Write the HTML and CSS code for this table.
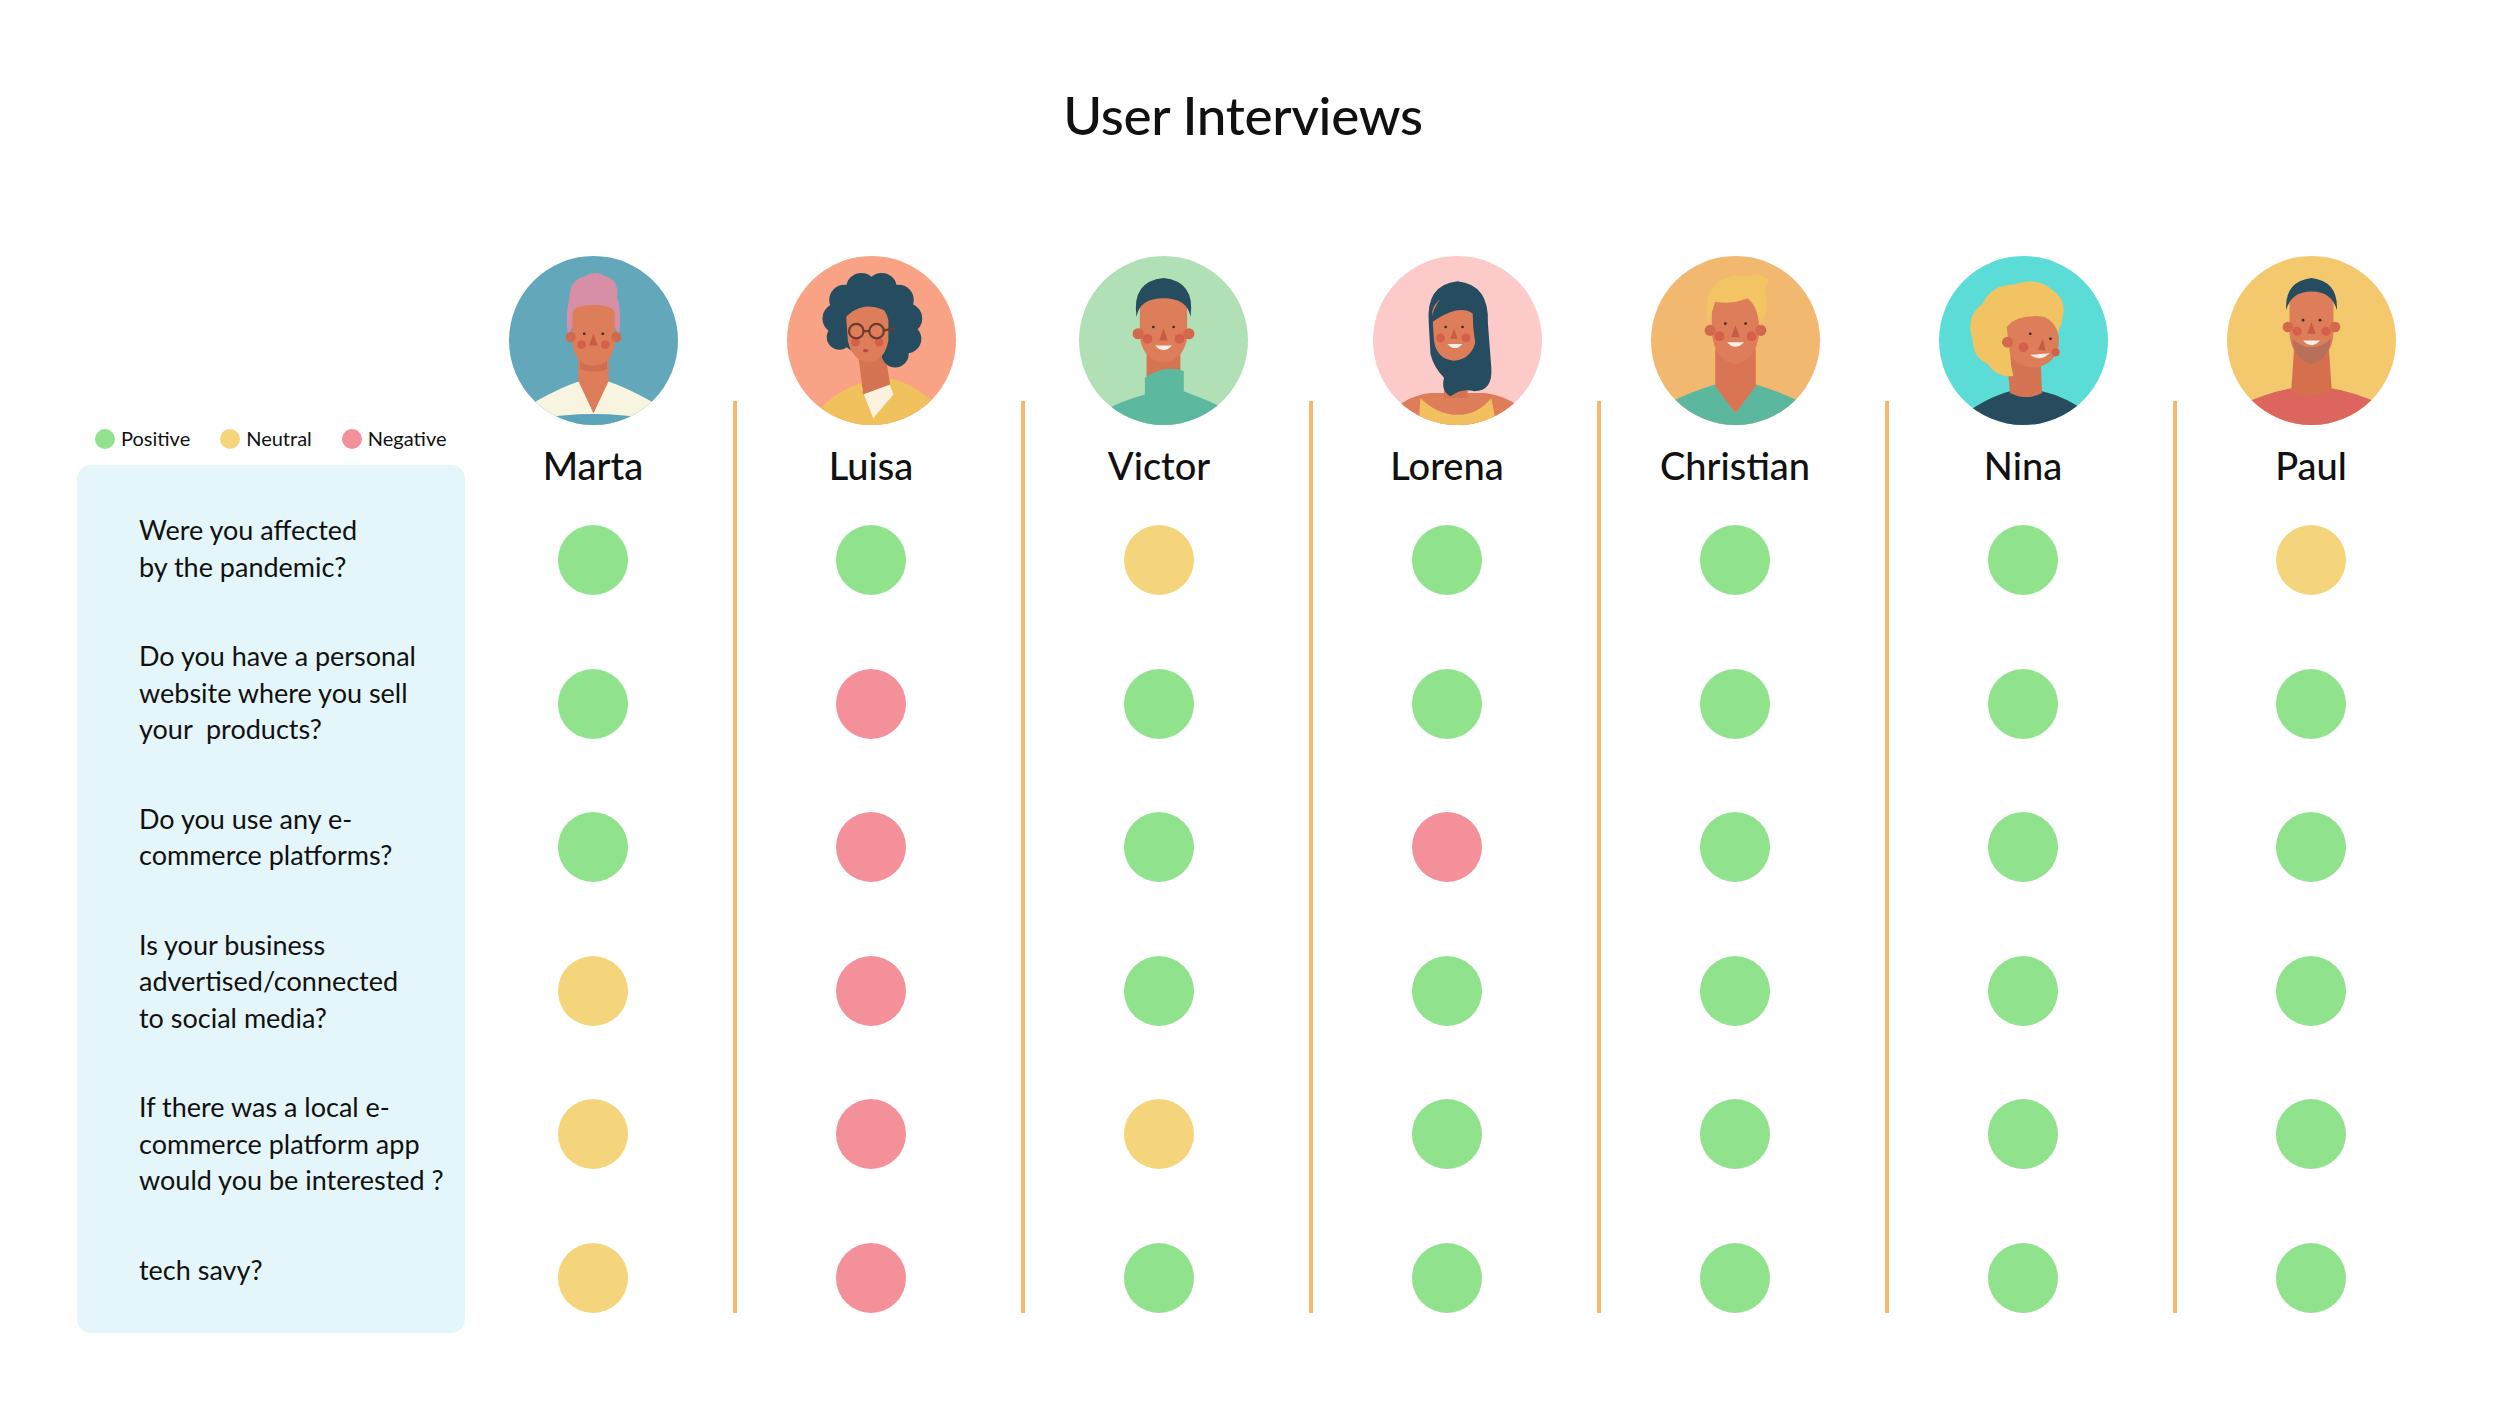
FILE: index.html
```html
<!DOCTYPE html>
<html lang="en">
<head>
<meta charset="utf-8">
<title>User Interviews</title>
<link rel="stylesheet" href="styles.css">
</head>
<body>
<h1 class="title">User Interviews</h1>
<main class="board">
  <aside class="side">
    <div class="legend">
      <div class="legend-item"><span class="ldot pos"></span>Positive</div>
      <div class="legend-item"><span class="ldot neu"></span>Neutral</div>
      <div class="legend-item"><span class="ldot neg"></span>Negative</div>
    </div>
    <div class="panel">
      <p class="question">Were you affected<br>by the pandemic?</p>
      <p class="question">Do you have a personal<br>website where you sell<br>your&nbsp; products?</p>
      <p class="question">Do you use any e-<br>commerce platforms?</p>
      <p class="question">Is your business<br>advertised/connected<br>to social media?</p>
      <p class="question">If there was a local e-<br>commerce platform app<br>would you be interested ?</p>
      <p class="question">tech savy?</p>
    </div>
  </aside>

  <section class="col col-first">
    <div class="col-head">
      <div class="avatar bg-marta">
        <svg viewBox="0 0 100 100" width="169" height="169">
          <path d="M16 86 Q30 78 42 74 L50 93 L58 74 Q70 78 84 86 L88 100 L12 100 Z" fill="#f7f5df"/>
          <path d="M14 97 Q50 90 86 97 L86 100 L14 100 Z" fill="#5aa3b8"/>
          <path d="M41 58 L41 74 L50 93 L59 74 L59 58 Z" fill="#dd7d5a"/>
          <path d="M42 62 Q50 66 58 62 L58 67 Q50 70 42 67 Z" fill="#d06f50"/>
          <path d="M35 48 Q33 34 36 24 Q36 14 45 12 Q51 8 57 12 Q65 14 64 24 Q67 34 65 48 Q62 36 50 34 Q38 36 35 48 Z" fill="#d78fa8"/>
          <path d="M37.5 34 Q38 29 50 29 Q62 29 62.5 34 L62.5 52 Q61 64 50 65 Q39 64 37.5 52 Z" fill="#dd7d5a"/>
          <circle cx="36.5" cy="48" r="3" fill="#d2694c"/>
          <circle cx="63.5" cy="48" r="3" fill="#d2694c"/>
          <circle cx="44.5" cy="46" r="0.8" fill="#3d2a2a"/>
          <circle cx="55.5" cy="46" r="0.8" fill="#3d2a2a"/>
          <path d="M50 46 L47.5 53 L52.5 53 Z" fill="#c65c44"/>
          <circle cx="43" cy="52.5" r="2.6" fill="#d65f4b"/>
          <circle cx="57" cy="52.5" r="2.6" fill="#d65f4b"/>
        </svg>
      </div>
    </div>
    <div class="col-body">
      <div class="name">Marta</div>
      <div class="dots">
        <span class="dot pos"></span><span class="dot pos"></span><span class="dot pos"></span>
        <span class="dot neu"></span><span class="dot neu"></span><span class="dot neu"></span>
      </div>
    </div>
  </section>

  <section class="col">
    <div class="col-head">
      <div class="avatar bg-luisa">
        <svg viewBox="0 0 100 100" width="169" height="169">
          <path d="M18 92 Q32 76 56 72 Q72 73 86 86 L88 100 L18 100 Z" fill="#f0c15c"/>
          <path d="M44 78 L51 96 L63 82 L60 74 Z" fill="#fbf3e0"/>
          <path d="M42 57 L45 82 L61 76 L58 57 Z" fill="#d47452"/>
          <g fill="#264c5f">
            <ellipse cx="50" cy="40" rx="22" ry="19"/>
            <circle cx="30" cy="37" r="9"/>
            <circle cx="34" cy="26" r="9"/>
            <circle cx="44" cy="19" r="9"/>
            <circle cx="56" cy="19" r="9"/>
            <circle cx="66" cy="26" r="9"/>
            <circle cx="71" cy="37" r="9"/>
            <circle cx="71" cy="49" r="8.5"/>
            <circle cx="64" cy="58" r="8"/>
            <circle cx="31" cy="48" r="7.5"/>
          </g>
          <path d="M35 36 Q37 27 47 27 Q58 28 60 38 L60 50 Q58 62 48 63 Q38 61 36 50 Z" fill="#dd7d5a"/>
          <path d="M33 38 Q35 22 49 22 Q62 23 64 37 Q56 29 46 30 Q39 31 33 38 Z" fill="#264c5f"/>
          <circle cx="40.5" cy="51" r="2.6" fill="#d65f4b"/>
          <circle cx="54.5" cy="51" r="2.6" fill="#d65f4b"/>
          <g fill="none" stroke="#6e3a2c" stroke-width="1.3">
            <circle cx="41" cy="44.5" r="4.3"/>
            <circle cx="53" cy="44.5" r="4.3"/>
            <path d="M45.3 44.5 L48.7 44.5 M57.3 44 L64 43"/>
          </g>
          <ellipse cx="46.5" cy="56" rx="1.6" ry="1" fill="#b84b3c"/>
        </svg>
      </div>
    </div>
    <div class="col-body line">
      <div class="name">Luisa</div>
      <div class="dots">
        <span class="dot pos"></span><span class="dot neg"></span><span class="dot neg"></span>
        <span class="dot neg"></span><span class="dot neg"></span><span class="dot neg"></span>
      </div>
    </div>
  </section>

  <section class="col">
    <div class="col-head">
      <div class="avatar avatar-victor bg-victor">
        <svg viewBox="0 0 100 100" width="169" height="169">
          <rect x="40" y="54" width="20" height="26" fill="#d47452"/>
          <path d="M39 72 Q50 64 62 68 L62 80 Q76 85 90 92 L92 100 L8 100 L10 94 Q24 86 39 82 Z" fill="#5cb89f"/>
          <path d="M36 30 Q36 20 50 20 Q64 20 64 30 L64 48 Q62 62 50 63 Q38 62 36 48 Z" fill="#dd7d5a"/>
          <path d="M34 36 Q31 15 50 13 Q69 15 66 36 Q64 25 50 25 Q36 25 34 36 Z" fill="#264c5f"/>
          <circle cx="35" cy="46" r="3.3" fill="#d2694c"/>
          <circle cx="65" cy="46" r="3.3" fill="#d2694c"/>
          <circle cx="44" cy="42" r="0.8" fill="#3d2a2a"/>
          <circle cx="56" cy="42" r="0.8" fill="#3d2a2a"/>
          <path d="M50 43 L47.5 50 L52.5 50 Z" fill="#c65c44"/>
          <circle cx="40.5" cy="49" r="2.9" fill="#d65f4b"/>
          <circle cx="59.5" cy="49" r="2.9" fill="#d65f4b"/>
          <path d="M45 53 Q50 58.5 55 53 Z" fill="#f8efe6"/>
        </svg>
      </div>
    </div>
    <div class="col-body line">
      <div class="name">Victor</div>
      <div class="dots">
        <span class="dot neu"></span><span class="dot pos"></span><span class="dot pos"></span>
        <span class="dot pos"></span><span class="dot neu"></span><span class="dot pos"></span>
      </div>
    </div>
  </section>

  <section class="col">
    <div class="col-head">
      <div class="avatar avatar-lorena bg-lorena">
        <svg viewBox="0 0 100 100" width="169" height="169">
          <path d="M10 94 Q18 83 34 81 L66 81 Q82 83 92 94 L92 100 L10 100 Z" fill="#dd7d5a"/>
          <path d="M28 84 Q38 94 50 94 Q62 94 70 84 L73 100 L27 100 Z" fill="#f2c05e"/>
          <rect x="42" y="54" width="14" height="30" fill="#d47452"/>
          <path d="M33 40 Q31 17 50 15 Q69 17 68 40 L70 66 Q71 80 60 80 Q52 78 46 83 Q40 80 42 72 Q36 66 34 58 Z" fill="#264c5f"/>
          <path d="M35 33 Q37 24 48 24 Q59 24 61 33 L61 49 Q59 61 48 62 Q37 61 36 49 Z" fill="#dd7d5a"/>
          <path d="M34 40 Q37 20 53 21 Q66 25 66 42 L64 64 Q59 50 59 34 Q50 28 34 40 Z" fill="#264c5f"/>
          <circle cx="43" cy="42" r="0.8" fill="#3d2a2a"/>
          <circle cx="53" cy="42" r="0.8" fill="#3d2a2a"/>
          <path d="M48 43 L45.8 49 L50 49 Z" fill="#c65c44"/>
          <circle cx="40" cy="48.5" r="2.6" fill="#d65f4b"/>
          <circle cx="55" cy="48.5" r="2.6" fill="#d65f4b"/>
          <path d="M44 52 Q48.5 57 53 52 Z" fill="#f8efe6"/>
        </svg>
      </div>
    </div>
    <div class="col-body line">
      <div class="name">Lorena</div>
      <div class="dots">
        <span class="dot pos"></span><span class="dot pos"></span><span class="dot neg"></span>
        <span class="dot pos"></span><span class="dot pos"></span><span class="dot pos"></span>
      </div>
    </div>
  </section>

  <section class="col">
    <div class="col-head">
      <div class="avatar bg-christian">
        <svg viewBox="0 0 100 100" width="169" height="169">
          <path d="M8 88 Q24 80 38 76 L50 93 L62 76 Q76 80 92 88 L94 100 L6 100 Z" fill="#5cb79f"/>
          <path d="M38 55 L38 77 L50 93 L62 77 L62 55 Z" fill="#d97553"/>
          <path d="M36 28 Q36 20 50 20 Q64 20 64 28 L64 46 Q62 62 50 64 Q38 62 36 46 Z" fill="#dd7d5a"/>
          <path d="M34 40 Q30 24 39 16 Q47 10 57 12 Q65 9 70 15 Q66 17 68 23 Q71 32 64 41 Q63 29 57 25 Q47 29 38 27 Q36 33 34 40 Z" fill="#f3c463"/>
          <circle cx="35" cy="44" r="3.3" fill="#d2694c"/>
          <circle cx="65" cy="44" r="3.3" fill="#d2694c"/>
          <circle cx="44" cy="40" r="0.8" fill="#3d2a2a"/>
          <circle cx="56" cy="40" r="0.8" fill="#3d2a2a"/>
          <path d="M50 41 L47.5 48 L52.5 48 Z" fill="#c65c44"/>
          <circle cx="40.5" cy="47.5" r="2.9" fill="#d65f4b"/>
          <circle cx="59.5" cy="47.5" r="2.9" fill="#d65f4b"/>
          <path d="M45 51 Q50 56.5 55 51 Z" fill="#f8efe6"/>
        </svg>
      </div>
    </div>
    <div class="col-body line">
      <div class="name">Christian</div>
      <div class="dots">
        <span class="dot pos"></span><span class="dot pos"></span><span class="dot pos"></span>
        <span class="dot pos"></span><span class="dot pos"></span><span class="dot pos"></span>
      </div>
    </div>
  </section>

  <section class="col">
    <div class="col-head">
      <div class="avatar bg-nina">
        <svg viewBox="0 0 100 100" width="169" height="169">
          <path d="M14 94 Q30 83 42 80 Q52 85 61 80 Q75 83 90 94 L92 100 L10 100 Z" fill="#284c5e"/>
          <path d="M40 58 L42 81 Q52 86 61 81 L60 58 Z" fill="#d47452"/>
          <path d="M20 50 Q15 36 26 28 Q31 17 44 17 Q58 12 67 20 Q76 26 73 37 L70 47 Q60 37 45 41 Q40 57 44 71 Q34 72 29 64 Q20 60 20 50 Z" fill="#f2c362"/>
          <path d="M40 42 Q48 33 62 36 Q71 40 71 51 Q70 63 58 66 Q46 66 42 58 Z" fill="#dd7d5a"/>
          <path d="M36 42 Q41 24 58 24 Q71 26 73 41 Q65 34 52 36 Q44 37 36 42 Z" fill="#f2c362"/>
          <circle cx="40.5" cy="51" r="3.2" fill="#d2694c"/>
          <circle cx="54" cy="46" r="0.8" fill="#3d2a2a"/>
          <circle cx="66" cy="49" r="0.8" fill="#3d2a2a"/>
          <path d="M61.5 49 L58.5 55.5 L63 56 Z" fill="#c65c44"/>
          <circle cx="50" cy="54" r="2.9" fill="#d65f4b"/>
          <circle cx="69" cy="57" r="2.4" fill="#d65f4b"/>
          <path d="M54 58.5 Q60 63 65.5 57.5 Z" fill="#f8efe6"/>
        </svg>
      </div>
    </div>
    <div class="col-body line">
      <div class="name">Nina</div>
      <div class="dots">
        <span class="dot pos"></span><span class="dot pos"></span><span class="dot pos"></span>
        <span class="dot pos"></span><span class="dot pos"></span><span class="dot pos"></span>
      </div>
    </div>
  </section>

  <section class="col">
    <div class="col-head">
      <div class="avatar bg-paul">
        <svg viewBox="0 0 100 100" width="169" height="169">
          <path d="M8 88 Q26 80 40 78 Q50 81 60 78 Q74 80 92 88 L94 100 L6 100 Z" fill="#dc665d"/>
          <path d="M40 50 L38 80 Q50 84 62 80 L60 50 Z" fill="#d66f4c"/>
          <path d="M37 28 Q37 18 50 18 Q63 18 63 28 L63 46 Q62 60 50 64 Q38 60 37 46 Z" fill="#dd7d5a"/>
          <path d="M38.5 49 Q40 62 50 64 Q60 62 61.5 49 Q56 54 50 54 Q44 54 38.5 49 Z" fill="#b8705a"/>
          <path d="M35 32 Q34 15 50 13 Q66 15 65 32 Q62 21 50 21 Q38 21 35 32 Z" fill="#264c5f"/>
          <circle cx="36" cy="42" r="3.1" fill="#d2694c"/>
          <circle cx="64" cy="42" r="3.1" fill="#d2694c"/>
          <circle cx="45" cy="38" r="0.8" fill="#3d2a2a"/>
          <circle cx="55" cy="38" r="0.8" fill="#3d2a2a"/>
          <path d="M50 39 L47.5 46 L52.5 46 Z" fill="#c65c44"/>
          <circle cx="41.5" cy="44.5" r="2.7" fill="#d65f4b"/>
          <circle cx="58.5" cy="44.5" r="2.7" fill="#d65f4b"/>
          <path d="M45 50 Q50 55.5 55 50 Z" fill="#f8efe6"/>
        </svg>
      </div>
    </div>
    <div class="col-body line">
      <div class="name">Paul</div>
      <div class="dots">
        <span class="dot neu"></span><span class="dot pos"></span><span class="dot pos"></span>
        <span class="dot pos"></span><span class="dot pos"></span><span class="dot pos"></span>
      </div>
    </div>
  </section>
</main>
</body>
</html>
```

FILE: styles.css
```css
* {
  box-sizing: border-box;
}

html, body {
  margin: 0;
  padding: 0;
}

body {
  width: 2500px;
  height: 1406px;
  background: #ffffff;
  color: #111111;
  font-family: Lato, "Open Sans", "Liberation Sans", sans-serif;
  overflow: hidden;
}

.title {
  margin: 0;
  padding: 82px 14px 0 0;
  font-size: 53px;
  line-height: 65px;
  font-weight: 500;
  letter-spacing: -0.3px;
  text-align: center;
}

.board {
  display: flex;
  align-items: flex-start;
  margin-top: 109px;
  padding-left: 77px;
}

/* left side: legend + question panel */
.side {
  width: 388px;
  display: flex;
  flex-direction: column;
}

.legend {
  display: flex;
  align-items: center;
  gap: 30px;
  height: 25px;
  margin-top: 170px;
  padding-left: 18px;
}

.legend-item {
  display: flex;
  align-items: center;
  gap: 6px;
  font-size: 20px;
  line-height: 25px;
}

.ldot {
  width: 20px;
  height: 20px;
  border-radius: 50%;
}

.panel {
  margin-top: 14px;
  height: 868px;
  background: #e4f6f9;
  border-radius: 14px;
  padding: 47px 0 0 62px;
  display: flex;
  flex-direction: column;
  gap: 53px;
}

.question {
  margin: 0;
  font-size: 27px;
  line-height: 36.5px;
  white-space: nowrap;
}

/* person columns */
.col {
  width: 288px;
  display: flex;
  flex-direction: column;
}

.col-first {
  width: 268px;
}

.col-head {
  height: 145px;
  display: flex;
  justify-content: center;
  align-items: flex-start;
  padding: 0 16px 0 4px;
}

.col-first .col-head {
  padding: 0 12px 0 0;
}

.avatar {
  flex: none;
  width: 169px;
  height: 169px;
  border-radius: 50%;
  overflow: hidden;
}

.avatar-victor {
  margin-left: 8px;
}

.avatar-lorena {
  margin-left: 20px;
}

.avatar svg {
  display: block;
}

.bg-marta { background: #63a7ba; }
.bg-luisa { background: #f9a285; }
.bg-victor { background: #b1dfb6; }
.bg-lorena { background: #fdcaca; }
.bg-christian { background: #f3b86f; }
.bg-nina { background: #5cdcd6; }
.bg-paul { background: #f4c96e; }

.col-body {
  display: flex;
  flex-direction: column;
  align-items: center;
  padding: 0 12px 0 0;
}

.col-body.line {
  border-left: 4px solid #f5b86d;
  padding: 0 16px 0 0;
}

.name {
  margin-top: 41px;
  font-size: 38px;
  line-height: 46px;
  font-weight: 500;
  white-space: nowrap;
}

.dots {
  margin-top: 37px;
  display: flex;
  flex-direction: column;
  gap: 73.6px;
}

.dot {
  display: block;
  width: 70px;
  height: 70px;
  border-radius: 50%;
}

.pos { background: #90e28d; }
.neu { background: #f4d57b; }
.neg { background: #f4909a; }
```
